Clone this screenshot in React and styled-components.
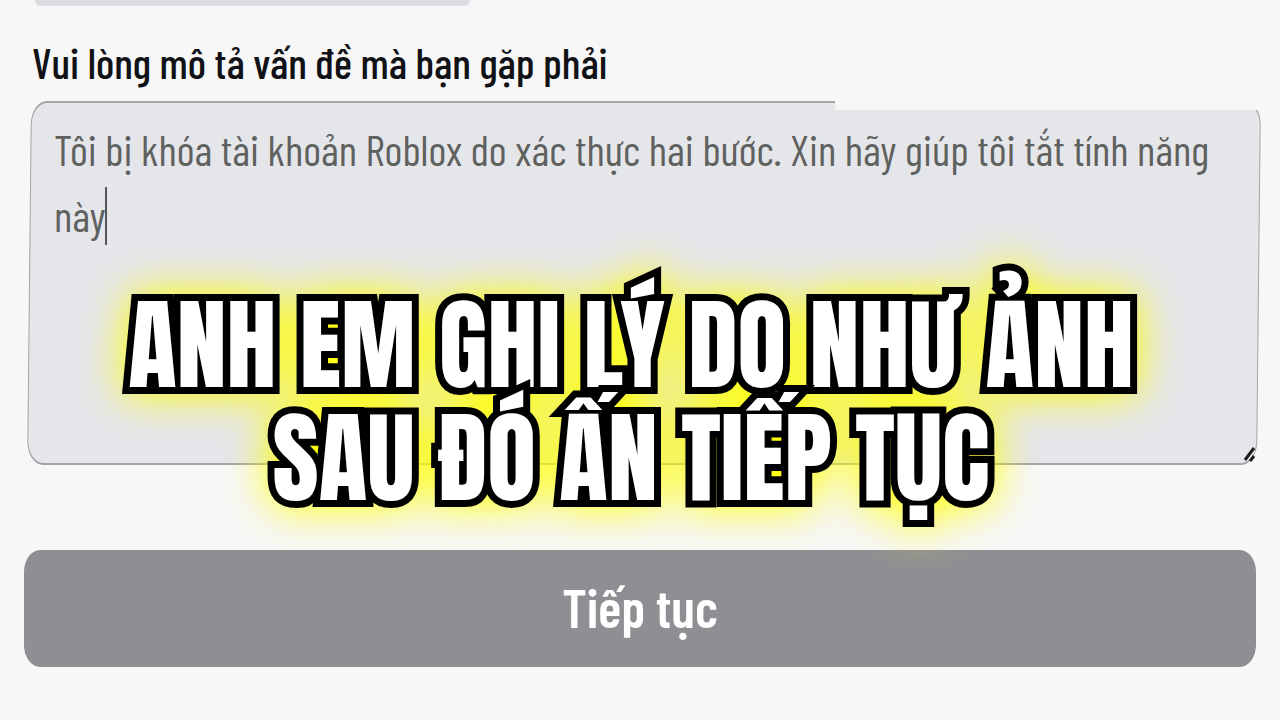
import { useState } from 'react';
import styled, { createGlobalStyle } from 'styled-components';

const GlobalStyle = createGlobalStyle`
  * {
    box-sizing: border-box;
  }

  body {
    margin: 0;
    background-color: #f7f7f7;
    font-family: 'Barlow Condensed', 'Roboto Condensed', Roboto, sans-serif;
  }
`;

const Page = styled.main`
  position: relative;
  display: flex;
  flex-direction: column;
  min-height: 100vh;
  overflow: hidden;
`;

const PreviousField = styled.div`
  width: 34%;
  height: 6px;
  margin-left: 35px;
  border-radius: 0 0 12px 12px;
  background-color: #dcdde2;
`;

const Label = styled.label`
  margin: 28px 32px 0;
  color: #111216;
  font-size: 43px;
  font-weight: 500;
  line-height: 56px;
`;

const Field = styled.div`
  position: relative;
  display: flex;
  margin: 11px 21px 0 29px;

  &::before {
    content: '';
    position: absolute;
    inset: 0;
    border: 1px solid #a3a4a8;
    border-top-width: 2px;
    border-bottom-width: 2px;
    border-radius: 16px / 24px;
    background-color: #e5e6ea;
    transform: skewX(-0.6deg);
  }
`;

const TextArea = styled.textarea`
  position: relative;
  flex: 1;
  height: 364px;
  padding: 15px 25px;
  border: none;
  outline: none;
  background: transparent;
  color: #5f615f;
  font-family: inherit;
  font-size: 43px;
  line-height: 66px;
  resize: none;
`;

const Caret = styled.span`
  position: absolute;
  top: 86px;
  left: 76px;
  width: 2px;
  height: 58px;
  background-color: #55565a;
`;

const TopPatch = styled.div`
  position: absolute;
  top: -2px;
  right: -4px;
  width: 428px;
  height: 11px;
  background-color: #f7f7f7;
`;

const ResizeGrip = styled.svg`
  position: absolute;
  right: 2px;
  bottom: 2px;
  width: 14px;
  height: 18px;
`;

const ContinueButton = styled.button`
  height: 117px;
  margin: 85px 24px 0;
  padding-bottom: 6px;
  border: none;
  border-radius: 16px / 22px;
  background-color: #8e8f93;
  color: #ffffff;
  font-family: inherit;
  font-size: 54px;
  font-weight: 600;
  cursor: pointer;
`;

const Caption = styled.p`
  position: absolute;
  top: 288px;
  left: 0;
  right: 0;
  margin: 0;
  padding-right: 18px;
  color: #ffffff;
  font-family: Anton, 'Roboto Condensed', sans-serif;
  font-size: 100px;
  font-weight: 400;
  line-height: 113px;
  text-align: center;
  pointer-events: none;
  -webkit-text-stroke: 14px #000000;
  paint-order: stroke fill;
  filter: drop-shadow(0 0 22px #ffff00);
`;

const CaptionLine = styled.span`
  display: block;
`;

const App = () => {
  const [message, setMessage] = useState(
    'Tôi bị khóa tài khoản Roblox do xác thực hai bước. Xin hãy giúp tôi tắt tính năng này'
  );

  return (
    <>
      <GlobalStyle />
      <Page>
        <PreviousField />
        <Label htmlFor="description">Vui lòng mô tả vấn đề mà bạn gặp phải</Label>
        <Field>
          <TextArea
            id="description"
            spellCheck={false}
            value={message}
            onChange={(event) => setMessage(event.target.value)}
          />
          <Caret />
          <TopPatch />
          <ResizeGrip viewBox="0 0 14 18" aria-hidden="true">
            <path d="M2 15 11 3M7 16l4-5" fill="none" stroke="#1d1d1f" strokeWidth="3" />
            <path d="M4 16 12 6" fill="none" stroke="#f7f7f7" strokeWidth="1" />
          </ResizeGrip>
        </Field>
        <ContinueButton type="button">Tiếp tục</ContinueButton>
        <Caption>
          <CaptionLine>ANH EM GHI LÝ DO NHƯ ẢNH</CaptionLine>
          <CaptionLine>SAU ĐÓ ẤN TIẾP TỤC</CaptionLine>
        </Caption>
      </Page>
    </>
  );
};

export default App;
